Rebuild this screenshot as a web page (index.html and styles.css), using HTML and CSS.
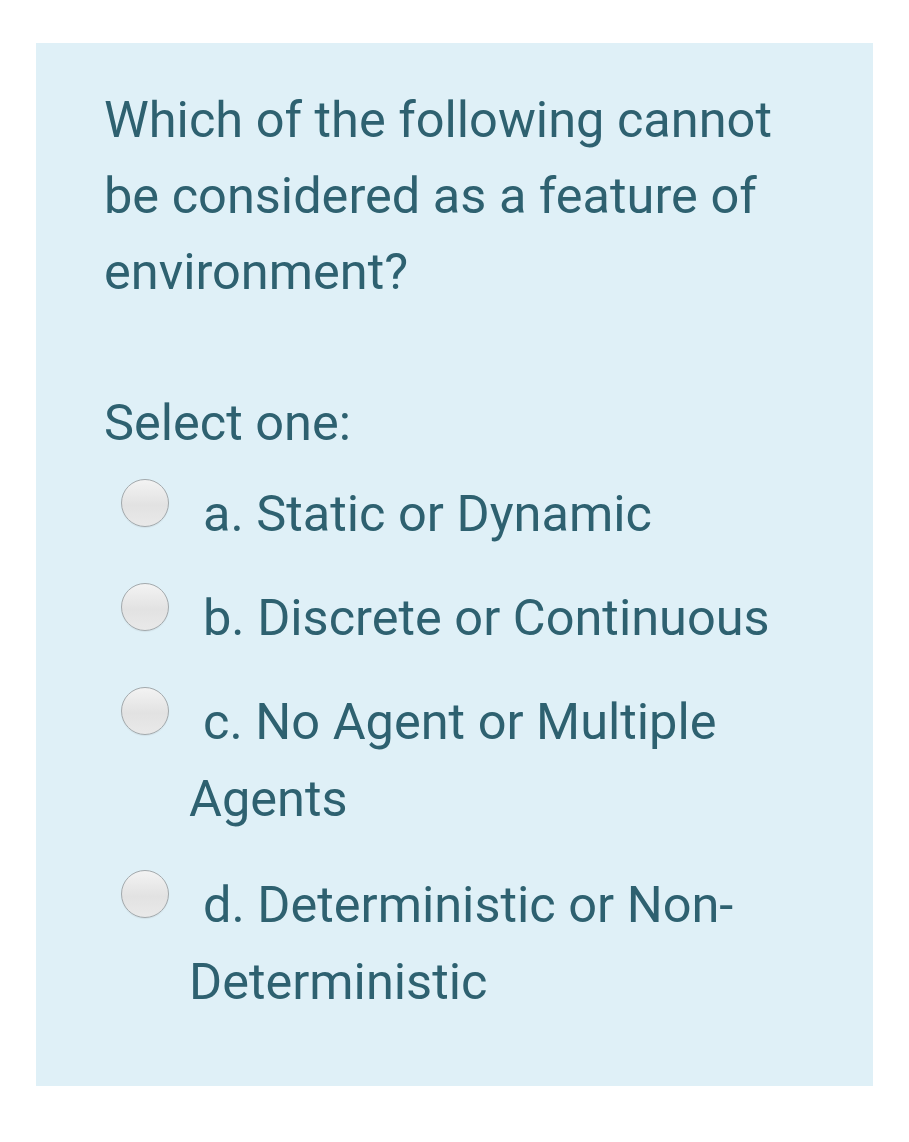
FILE: index.html
```html
<!DOCTYPE html>
<html>
<head>
<meta charset="utf-8">
<link rel="stylesheet" href="styles.css">
</head>
<body>
<div class="card">
  <div class="qtext">Which of the following cannot be considered as a feature of environment?</div>
  <div class="prompt">Select one:</div>
  <div class="answers">
    <div class="opt"><span class="radio"></span>a. Static or Dynamic</div>
    <div class="opt"><span class="radio"></span>b. Discrete or Continuous</div>
    <div class="opt"><span class="radio"></span>c. No Agent or Multiple Agents</div>
    <div class="opt"><span class="radio"></span>d. Deterministic or Non-Deterministic</div>
  </div>
</div>
</body>
</html>
```
FILE: styles.css
```css
html, body { margin: 0; padding: 0; background: #ffffff; }
body {
  width: 909px;
  height: 1142px;
  padding: 43px 0 0 36px;
  box-sizing: border-box;
  font-family: Roboto, "Liberation Sans", sans-serif;
  color: #2e6170;
}
.card {
  width: 837px;
  height: 1043px;
  background: #dff0f7;
  box-sizing: border-box;
  padding: 39px 40px 0 68px;
}
.qtext {
  font-size: 50.5px;
  line-height: 76px;
  width: 700px;
}
.prompt {
  font-size: 50.5px;
  line-height: 76px;
  margin-top: 75px;
}
.answers {
  margin-top: 14px;
  padding-left: 85px;
}
.opt {
  font-size: 50.5px;
  line-height: 77px;
  width: 620px;
  margin-bottom: 27px;
}
.opt:nth-child(3) { margin-bottom: 29px; }
.radio {
  display: inline-block;
  width: 46px;
  height: 46px;
  border-radius: 50%;
  border: 1px solid #a3a9ac;
  background: linear-gradient(#f3f3f3, #e2e2e2 55%, #e9e9e9);
  margin-left: -68px;
  margin-right: 34px;
  vertical-align: 4px;
  box-shadow: 0 1px 1px rgba(0,0,0,0.06);
}
```
